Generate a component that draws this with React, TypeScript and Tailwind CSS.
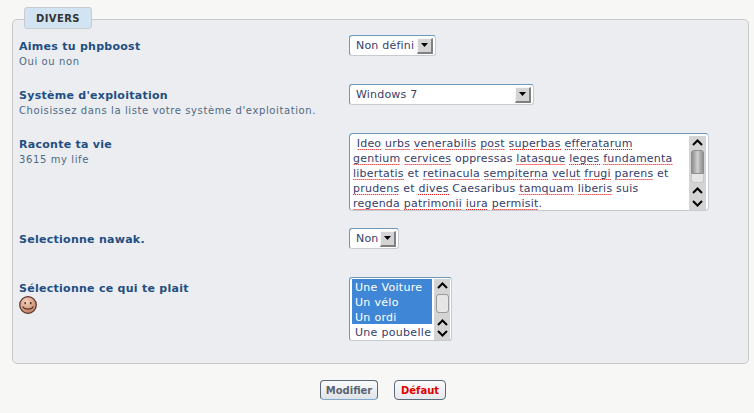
const Mark = ({ children }: { children: string }) => (
  <span className="bg-[linear-gradient(90deg,#e80000_50%,transparent_50%)] bg-[length:2px_1px] bg-bottom bg-repeat-x">{children}</span>
);

const ArrowButton = () => (
  <span className="flex h-[16px] w-[16px] items-center justify-center border border-t-[#f6f6f6] border-l-[#f6f6f6] border-r-2 border-b-2 border-r-[#808080] border-b-[#808080] bg-[#d4d4d4]">
    <svg width="7" height="4" viewBox="0 0 7 4">
      <path d="M0 0h7L3.5 4z" fill="#000" />
    </svg>
  </span>
);

const Select = ({ value, width }: { value: string; width: string }) => (
  <div
    className={`flex h-[21px] ${width} items-center justify-between rounded-[3px] border border-[#c6cbd1] border-t-[#6f97b8] border-l-[#6f97b8] bg-white pl-[6px] pr-[2px] text-[11px] tracking-[0.2px] whitespace-nowrap text-[#36406a]`}
  >
    <span className="pt-[1px]">{value}</span>
    <ArrowButton />
  </div>
);

const Chevron = ({ up }: { up?: boolean }) => (
  <svg width="11" height="7" viewBox="0 0 11 7" className="block">
    <path d={up ? 'M1 6l4.5-4.5L10 6' : 'M1 1l4.5 4.5L10 1'} fill="none" stroke="#000" strokeWidth="2" />
  </svg>
);

const Row = ({
  label,
  sub,
  icon,
  height,
  children
}: {
  label: string;
  sub?: string;
  icon?: boolean;
  height: string;
  children: React.ReactNode;
}) => (
  <div className={`flex ${height}`}>
    <div className="w-[330px] shrink-0 pt-[4px]">
      <div className="text-[11px] font-bold leading-[15px] tracking-[0.27px] text-[#1f4f82]">{label}</div>
      {sub && <div className="mt-[1px] text-[10px] leading-[14px] tracking-[0.6px] text-[#4e6a85]">{sub}</div>}
      {icon && <Smiley />}
    </div>
    {children}
  </div>
);

const Smiley = () => (
  <svg width="18" height="18" viewBox="0 0 18 18" className="block">
    <defs>
      <radialGradient id="face" cx="40%" cy="30%" r="75%">
        <stop offset="0%" stopColor="#f8d2bf" />
        <stop offset="100%" stopColor="#bd7d5e" />
      </radialGradient>
    </defs>
    <circle cx="9" cy="9" r="8.3" fill="url(#face)" stroke="#5a3226" strokeWidth="1.2" />
    <rect x="5.5" y="6" width="1.4" height="2.2" fill="#4a2a20" />
    <rect x="11" y="6" width="1.4" height="2.2" fill="#4a2a20" />
    <path d="M3.8 10.5c1.5 3.4 8.9 3.4 10.4 0" fill="none" stroke="#5a3226" strokeWidth="1.2" />
  </svg>
);

export default function App() {
  return (
    <div className="h-[413px] w-[754px] overflow-hidden bg-[#f7f7f6] pl-[12px] pr-[5px] pt-[19px] font-['DejaVu_Sans',sans-serif]">
      <div className="relative h-[345px] rounded-[5px] border border-[#c8c8c8] bg-[#ecedf0] pl-[6px] pt-[15px]">
        <div className="absolute left-[11px] top-[-13px] flex h-[22px] w-[68px] items-center justify-center rounded-[3px] border border-[#c6ccd2] bg-[#d2e3f2] text-[10px] font-bold tracking-[0.4px] text-[#333]">
          DIVERS
        </div>

        <Row label="Aimes tu phpboost" sub="Oui ou non" height="h-[49px]">
          <Select value="Non défini" width="w-[87px]" />
        </Row>

        <Row label="Système d'exploitation" sub="Choisissez dans la liste votre système d'exploitation." height="h-[49px]">
          <Select value="Windows 7" width="w-[185px]" />
        </Row>

        <Row label="Raconte ta vie" sub="3615 my life" height="h-[95px]">
          <div className="flex h-[78px] w-[360px] rounded-[4px] border border-[#c6cbd1] border-t-[#6f97b8] border-l-[#6f97b8] bg-white pl-[3px] pt-[2px]">
            <div className="w-[336px] shrink-0 text-[11px] leading-[15px] tracking-[0.22px] text-[#36406a]">
              <div className="whitespace-pre">
                {' '}
                <Mark>Ideo</Mark> <Mark>urbs</Mark> <Mark>venerabilis</Mark> <Mark>post</Mark> <Mark>superbas</Mark> <Mark>efferatarum</Mark>
              </div>
              <div className="whitespace-pre">
                <Mark>gentium</Mark> <Mark>cervices</Mark> oppressas <Mark>latasque</Mark> <Mark>leges</Mark> <Mark>fundamenta</Mark>
              </div>
              <div className="whitespace-pre">
                <Mark>libertatis</Mark> et <Mark>retinacula</Mark> <Mark>sempiterna</Mark> <Mark>velut</Mark> <Mark>frugi</Mark> <Mark>parens</Mark> et
              </div>
              <div className="whitespace-pre">
                <Mark>prudens</Mark> et <Mark>dives</Mark> Caesaribus <Mark>tamquam</Mark> <Mark>liberis</Mark> suis
              </div>
              <div className="whitespace-pre">
                <Mark>regenda</Mark> <Mark>patrimonii</Mark> <Mark>iura</Mark> <Mark>permisit</Mark>.
              </div>
            </div>
            <div className="flex h-[74px] w-[17px] flex-col items-center bg-[#d4d4d4] py-[3px]">
              <Chevron up />
              <div className="mt-[4px] h-[24px] w-[13px] rounded-t-[3px] border border-[#8f8f8f] bg-gradient-to-r from-[#8f8f8f] via-[#d0d0d0] to-[#8f8f8f]" />
              <div className="h-[9px] w-[13px] rounded-b-[3px] border border-t-0 border-[#c8c8c8] bg-[#e6e6e6]" />
              <div className="mt-auto flex flex-col gap-[6px]">
                <Chevron up />
                <Chevron />
              </div>
            </div>
          </div>
        </Row>

        <Row label="Selectionne nawak." height="h-[49px]">
          <Select value="Non" width="w-[50px]" />
        </Row>

        <Row label="Sélectionne ce qui te plait" icon height="h-[64px]">
          <div className="flex h-[64px] w-[103px] rounded-[3px] border border-[#c6cbd1] border-t-[#6f97b8] border-l-[#6f97b8] bg-white pl-[2px] pt-[1px] text-[11px] leading-[15px] tracking-[0.3px] text-[#36406a]">
            <div className="w-[80px] shrink-0">
              <div className="bg-[#3f87d6] pl-[3px] pt-[1px] h-[15px] text-white">Une Voiture</div>
              <div className="bg-[#3f87d6] pl-[3px] pt-[1px] h-[15px] text-white">Un vélo</div>
              <div className="bg-[#3f87d6] pl-[3px] pt-[1px] h-[15px] text-white">Un ordi</div>
              <div className="pl-[3px] pt-[1px] h-[15px]">Une poubelle</div>
            </div>
            <div className="ml-auto mr-[1px] flex h-[61px] w-[16px] flex-col items-center bg-[#d4d4d4] py-[3px]">
              <Chevron up />
              <div className="mt-[5px] h-[19px] w-[13px] rounded-[3px] border border-[#9a9a9a] bg-[#e6e6e6]" />
              <div className="mt-auto flex flex-col gap-[4px]">
                <Chevron up />
                <Chevron />
              </div>
            </div>
          </div>
        </Row>
      </div>

      <div className="mt-[16px] flex justify-center gap-[16px] pl-[5px]">
        <button className="h-[20px] w-[58px] rounded-[4px] border border-[#5a6a7a] border-b-[#7fa8cf] bg-gradient-to-b from-[#fbfbfb] to-[#dfe3e8] text-[10px] font-bold text-[#5a6470]">
          Modifier
        </button>
        <button className="h-[20px] w-[52px] rounded-[4px] border border-[#5a6a7a] bg-gradient-to-b from-[#fbfbfb] to-[#e6e8ec] text-[10px] font-bold text-[#e00000]">
          Défaut
        </button>
      </div>
    </div>
  );
}
